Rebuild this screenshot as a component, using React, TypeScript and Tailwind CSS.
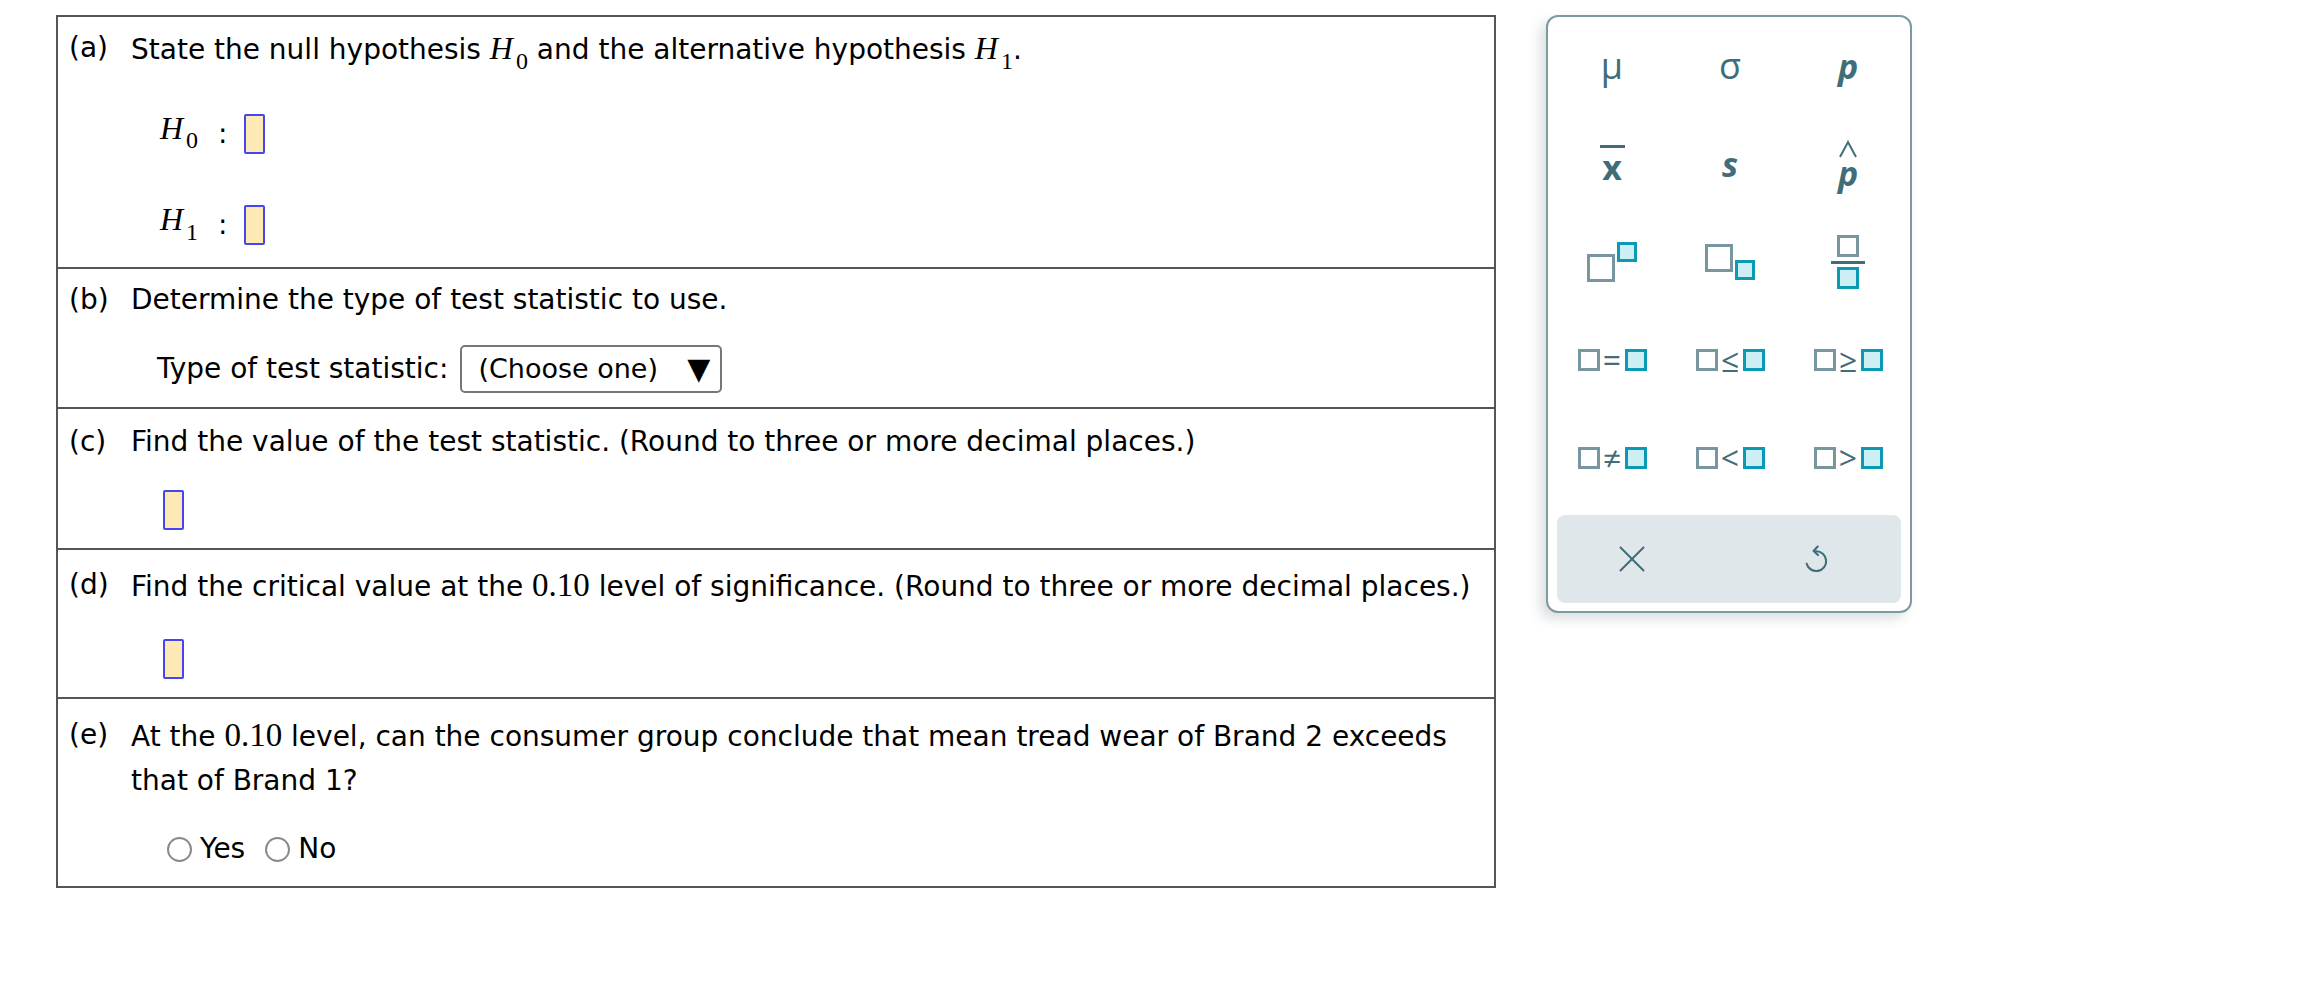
import { X } from "lucide-react";

const sans = "font-['DejaVu_Sans',Verdana,sans-serif]";

function H({ sub }: { sub: string }) {
  return (
    <span className="font-['Liberation_Serif','Times_New_Roman',serif] text-[32px] italic">
      H
      <span className="not-italic text-[24px] align-[-0.4em] ml-[3px]">{sub}</span>
    </span>
  );
}

function Num({ children }: { children: string }) {
  return <span className="font-['Liberation_Serif','Times_New_Roman',serif] text-[33px]">{children}</span>;
}

function AnswerBox() {
  return (
    <span className="inline-block w-[21px] h-[40px] border-2 border-[#4545f2] bg-[#fde9b4] rounded-[2px] align-middle" />
  );
}

function Radio({ label }: { label: string }) {
  return (
    <label className="flex items-center gap-[8px]">
      <span className="w-[25px] h-[25px] rounded-full border-2 border-[#8a8a8a] bg-white" />
      <span>{label}</span>
    </label>
  );
}

function Row({
  label,
  className,
  children,
}: {
  label: string;
  className: string;
  children: React.ReactNode;
}) {
  return (
    <div className={"flex " + className}>
      <div className="w-[73px] shrink-0 pl-[11px]">{label}</div>
      <div className="flex-1 flex flex-col items-start pr-[10px]">{children}</div>
    </div>
  );
}

// keypad pieces
function GrayBox({ size = "s" }: { size?: "s" | "l" }) {
  return (
    <span
      className={
        size === "l"
          ? "block w-[28px] h-[28px] border-[3px] border-[#7896a0]"
          : "block w-[22px] h-[22px] border-[3px] border-[#7896a0]"
      }
    />
  );
}

function CyanBox({ size = "s" }: { size?: "s" | "m" }) {
  return (
    <span
      className={
        size === "m"
          ? "block w-[20px] h-[20px] border-[3px] border-[#0b9ab6] bg-[#cdeef3]"
          : "block w-[22px] h-[22px] border-[3px] border-[#0b9ab6] bg-[#cdeef3]"
      }
    />
  );
}

function Relation({ op }: { op: string }) {
  return (
    <div className="flex items-center gap-[3px]">
      <GrayBox />
      <span className="font-['Open_Sans',sans-serif] text-[32px] leading-none text-[#3f6d79] w-[19px] text-center">
        {op}
      </span>
      <CyanBox />
    </div>
  );
}

function UndoIcon() {
  return (
    <svg width="34" height="34" viewBox="0 0 24 24" fill="none" stroke="#3f6d79" strokeWidth="1.5" strokeLinecap="round" strokeLinejoin="round">
      <path d="M12 6.5 A7 7 0 1 1 5.4 15.3" />
      <path d="M13.2 3.2 L10.3 6.4 L13.4 9.2" />
    </svg>
  );
}

function Keypad() {
  const cell = "flex items-center justify-center";
  const sym = "font-['Open_Sans',sans-serif] text-[#3f6d79] leading-none";
  return (
    <div className="w-[366px] h-[598px] border-2 border-[#7d9aa3] rounded-[12px] bg-white shadow-[-6px_6px_12px_rgba(60,80,90,0.18)] flex flex-col">
      <div className="grid grid-cols-[118px_118px_118px] grid-rows-[repeat(5,98px)] pl-[5px]">
        <div className={cell}>
          <span className={sym + " text-[36px]"}>μ</span>
        </div>
        <div className={cell}>
          <span className={sym + " text-[36px]"}>σ</span>
        </div>
        <div className={cell}>
          <span className={sym + " text-[34px] font-bold italic"}>p</span>
        </div>

        <div className={cell}>
          <span className="flex flex-col items-center">
            <span className="block w-[25px] h-[3px] bg-[#3f6d79] mb-[2px]" />
            <span className={sym + " text-[34px] font-bold"}>x</span>
          </span>
        </div>
        <div className={cell}>
          <span className={sym + " text-[34px] font-bold italic"}>s</span>
        </div>
        <div className={cell}>
          <span className="flex flex-col items-center">
            <svg width="26" height="20" viewBox="0 0 26 20" fill="none" stroke="#3f6d79" strokeWidth="2">
              <path d="M5 18 L13 3 L21 18" />
            </svg>
            <span className={sym + " text-[34px] font-bold italic -mt-[3px]"}>p</span>
          </span>
        </div>

        <div className={cell}>
          <div className="flex items-start">
            <span className="mt-[12px]">
              <GrayBox size="l" />
            </span>
            <span className="ml-[2px]">
              <CyanBox size="m" />
            </span>
          </div>
        </div>
        <div className={cell}>
          <div className="flex items-start">
            <GrayBox size="l" />
            <span className="ml-[2px] mt-[16px]">
              <CyanBox size="m" />
            </span>
          </div>
        </div>
        <div className={cell}>
          <div className="flex flex-col items-center">
            <GrayBox />
            <span className="block w-[34px] h-[3px] bg-[#3f6d79] mt-[4px] mb-[3px]" />
            <CyanBox />
          </div>
        </div>

        <div className={cell}>
          <Relation op="=" />
        </div>
        <div className={cell}>
          <Relation op="≤" />
        </div>
        <div className={cell}>
          <Relation op="≥" />
        </div>

        <div className={cell}>
          <Relation op="≠" />
        </div>
        <div className={cell}>
          <Relation op="<" />
        </div>
        <div className={cell}>
          <Relation op=">" />
        </div>
      </div>

      <div className="mx-[9px] mt-[8px] h-[88px] rounded-[8px] bg-[#e0e7ea] flex items-center justify-between pl-[52px] pr-[68px]">
        <X size={46} strokeWidth={1.05} color="#3f6d79" />
        <UndoIcon />
      </div>
    </div>
  );
}

export default function App() {
  return (
    <div className={"min-h-screen bg-white text-black pt-[15px] pl-[56px] flex items-start gap-[50px] " + sans}>
      <div className="w-[1440px] border-2 border-[#555] text-[28px]">
        <Row label="(a)" className="h-[250px] pt-[11px] leading-[40px]">
          <p>
            State the null hypothesis <H sub="0" /> and the alternative hypothesis <H sub="1" />.
          </p>
          <div className="ml-[29px] mt-[27px] flex items-center">
            <H sub="0" />
            <span className="ml-[20px] mr-[16px]">:</span>
            <AnswerBox />
          </div>
          <div className="ml-[29px] mt-[39px] flex items-center">
            <H sub="1" />
            <span className="ml-[20px] mr-[16px]">:</span>
            <AnswerBox />
          </div>
        </Row>

        <Row label="(b)" className="h-[140px] border-t-2 border-[#555] pt-[11px] leading-[40px]">
          <p>Determine the type of test statistic to use.</p>
          <div className="ml-[26px] mt-[25px] flex items-center gap-[12px]">
            <span>Type of test statistic:</span>
            <div className="h-[48px] w-[262px] border-2 border-[#777] rounded-[5px] flex items-center justify-between pl-[16px] pr-[10px]">
              <span className="text-[27px]">(Choose one)</span>
              <span className="text-[30px] leading-none">▼</span>
            </div>
          </div>
        </Row>

        <Row label="(c)" className="h-[141px] border-t-2 border-[#555] pt-[13px] leading-[40px]">
          <p>Find the value of the test statistic. (Round to three or more decimal places.)</p>
          <div className="ml-[32px] mt-[28px] flex">
            <AnswerBox />
          </div>
        </Row>

        <Row label="(d)" className="h-[149px] border-t-2 border-[#555] pt-[15px] leading-[40px]">
          <p>
            Find the critical value at the <Num>0.10</Num> level of significance. (Round to three or more decimal places.)
          </p>
          <div className="ml-[32px] mt-[32px] flex">
            <AnswerBox />
          </div>
        </Row>

        <Row label="(e)" className="h-[189px] border-t-2 border-[#555] pt-[14px] leading-[44px]">
          <p>
            At the <Num>0.10</Num> level, can the consumer group conclude that mean tread wear of Brand 2 exceeds that of
            Brand 1?
          </p>
          <div className="ml-[36px] mt-[32px] flex items-center gap-[20px] leading-none">
            <Radio label="Yes" />
            <Radio label="No" />
          </div>
        </Row>
      </div>

      <Keypad />
    </div>
  );
}
